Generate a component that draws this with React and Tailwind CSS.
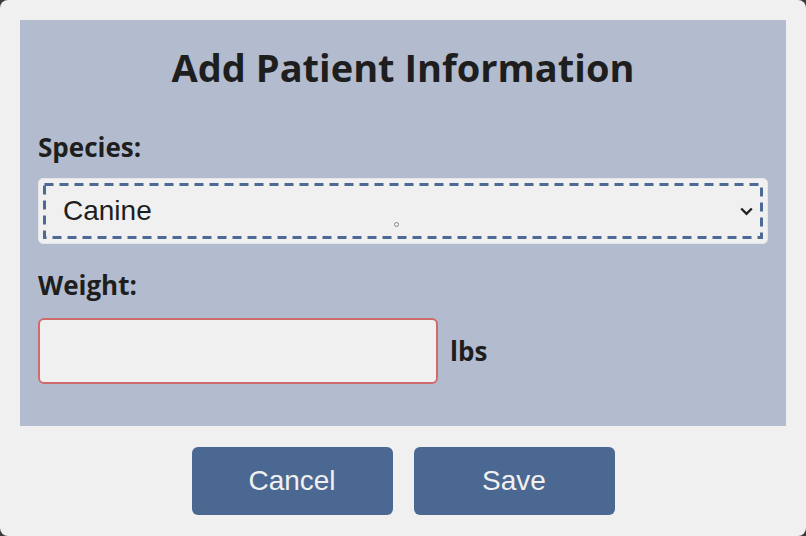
import React from 'react';

const headFont = { fontFamily: '"Open Sans", "Noto Sans", sans-serif' };
const bodyFont = { fontFamily: '"Liberation Sans", Arial, sans-serif' };

export default function App() {
  return (
    <div className="w-[806px] h-[536px] bg-[#3a3a3a]">
      <div className="h-full rounded-[8px] bg-[#f0f0f0] p-[20px] flex flex-col">
        <div className="bg-[#b3bccf] px-[18px] pt-[20px] pb-[42px] flex flex-col text-[#1e1e1e]" style={headFont}>
          <h1 className="text-center text-[38px] leading-[54px] font-bold m-0">Add Patient Information</h1>

          <label className="mt-[36px] text-[26px] leading-[34px] font-bold">Species:</label>
          <div className="relative mt-[14px]">
            <select
              defaultValue="canine"
              className="appearance-none w-full h-[66px] rounded-[5px] bg-[#f0f0f0] border border-[#e4e6ea] pl-[24px] pr-[40px] text-[28px] text-[#1e1e1e] outline-none"
              style={bodyFont}
            >
              <option value="canine">Canine</option>
              <option value="feline">Feline</option>
            </select>
            {/* focus ring, dashed */}
            <svg className="absolute inset-0 w-full h-full pointer-events-none" preserveAspectRatio="none">
              <rect x="6.5" y="6.5" width="717" height="53" fill="none" stroke="#4d6a96" strokeWidth="3" strokeDasharray="9 6" />
            </svg>
            <svg className="absolute right-[15px] top-[29px] pointer-events-none" width="13" height="9" viewBox="0 0 13 9">
              <path d="M1.2 1.5 L6.5 6.8 L11.8 1.5" fill="none" stroke="#222" strokeWidth="2.4" />
            </svg>
            <span className="absolute left-[356px] top-[44px] w-[5px] h-[5px] rounded-full border border-[#8a8a8a] pointer-events-none" />
          </div>

          <label className="mt-[24px] text-[26px] leading-[34px] font-bold">Weight:</label>
          <div className="mt-[16px] flex items-center gap-[12px]">
            <input
              type="text"
              className="w-[400px] h-[66px] rounded-[6px] bg-[#f0f0f0] border-2 border-[#cf6b6b] outline-none px-3 text-[28px]"
            />
            <span className="text-[26px] font-bold">lbs</span>
          </div>
        </div>

        <div className="mt-[21px] flex justify-center gap-[21px]">
          <button className="w-[201px] h-[68px] rounded-[6px] bg-[#4b6892] text-[#f0f0f0] text-[28px]" style={bodyFont}>
            Cancel
          </button>
          <button className="w-[201px] h-[68px] rounded-[6px] bg-[#4b6892] text-[#f0f0f0] text-[28px]" style={bodyFont}>
            Save
          </button>
        </div>
      </div>
    </div>
  );
}
